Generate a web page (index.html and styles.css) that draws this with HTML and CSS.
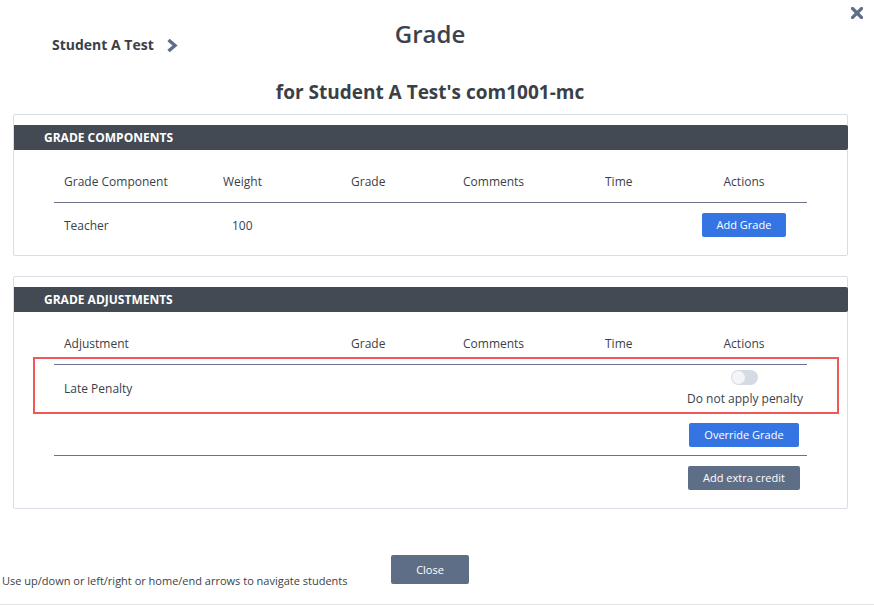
FILE: index.html
```html
<!DOCTYPE html>
<html>
<head>
<meta charset="utf-8">
<link rel="stylesheet" href="styles.css">
</head>
<body>
<div class="page">
  <header class="top">
    <div class="crumb">
      <span>Student A Test</span>
      <svg class="chev" width="12" height="13" viewBox="0 0 12 13"><polyline points="2.5,1 9,6.5 2.5,12" fill="none" stroke="#5f6e87" stroke-width="3.4"/></svg>
    </div>
    <h1 class="title">Grade</h1>
    <div></div>
  </header>
  <svg class="close-x" width="12" height="12" viewBox="0 0 12 12"><path d="M1.5 1.5 L10.5 10.5 M10.5 1.5 L1.5 10.5" stroke="#5f6e87" stroke-width="3.2" stroke-linecap="square"/></svg>

  <h2 class="subtitle">for Student A Test's com1001-mc</h2>

  <section class="panel">
    <div class="panel-head">GRADE COMPONENTS</div>
    <div class="grid">
      <div class="row th">
        <div class="c">Grade Component</div>
        <div class="c">Weight</div>
        <div class="c">Grade</div>
        <div class="c">Comments</div>
        <div class="c">Time</div>
        <div class="c act">Actions</div>
      </div>
      <div class="row td last">
        <div class="c">Teacher</div>
        <div class="c num">100</div>
        <div class="c"></div>
        <div class="c"></div>
        <div class="c"></div>
        <div class="c act"><button class="btn blue">Add Grade</button></div>
      </div>
    </div>
  </section>

  <section class="panel">
    <div class="panel-head">GRADE ADJUSTMENTS</div>
    <div class="grid">
      <div class="row th">
        <div class="c">Adjustment</div>
        <div class="c"></div>
        <div class="c">Grade</div>
        <div class="c">Comments</div>
        <div class="c">Time</div>
        <div class="c act">Actions</div>
      </div>
      <div class="row td late">
        <div class="c">Late Penalty</div>
        <div class="c"></div>
        <div class="c"></div>
        <div class="c"></div>
        <div class="c"></div>
        <div class="c act stack">
          <span class="toggle"><span class="knob"></span></span>
          <span class="tlabel">Do not apply penalty</span>
        </div>
        <div class="highlight"></div>
      </div>
      <div class="row td">
        <div class="c"></div>
        <div class="c"></div>
        <div class="c"></div>
        <div class="c"></div>
        <div class="c"></div>
        <div class="c act"><button class="btn blue">Override Grade</button></div>
      </div>
      <div class="row td last">
        <div class="c"></div>
        <div class="c"></div>
        <div class="c"></div>
        <div class="c"></div>
        <div class="c"></div>
        <div class="c act"><button class="btn gray">Add extra credit</button></div>
      </div>
    </div>
  </section>

  <footer class="foot">
    <div class="hint">Use up/down or left/right or home/end arrows to navigate students</div>
    <button class="btn gray closebtn">Close</button>
    <div></div>
  </footer>
</div>
</body>
</html>
```

FILE: styles.css
```css
* { box-sizing: border-box; }
html, body { margin: 0; padding: 0; background: #fff; }
body {
  font-family: "Open Sans", "Noto Sans", sans-serif;
  color: #3a3f48;
  width: 874px;
  height: 606px;
  overflow: hidden;
}
.page {
  position: relative;
  height: 605px;
  border-bottom: 1px solid #e4e6ec;
}
.top {
  display: grid;
  grid-template-columns: 1fr auto 1fr;
  align-items: start;
  width: 860px;
  padding-top: 18px;
}
.crumb {
  display: flex;
  align-items: center;
  padding-left: 52px;
  padding-top: 17px;
  font-size: 14px;
  font-weight: 700;
  color: #3a3f48;
}
.chev { margin-left: 12px; margin-top: 1px; }
.title {
  margin: 0;
  font-size: 24px;
  font-weight: 600;
  line-height: 32px;
  color: #3d434d;
}
.close-x {
  position: absolute;
  left: 851px;
  top: 7px;
}
.subtitle {
  margin: 24px 0 0;
  width: 860px;
  text-align: center;
  font-size: 19px;
  font-weight: 700;
  line-height: 28px;
  color: #3a3f48;
}
.panel {
  width: 835px;
  margin: 8px 0 0 13px;
  border: 1px solid #d9dde6;
  border-radius: 2px;
  padding: 10px 0 10px;
}
.panel + .panel { margin-top: 20px; }
.panel-head {
  background: #434a54;
  color: #fff;
  height: 25px;
  line-height: 25px;
  font-size: 12px;
  font-weight: 700;
  padding-left: 30px;
  margin-right: -1px;
  border-radius: 0 2px 2px 0;
}
.grid {
  margin: 13px 40px 0;
  position: relative;
}
.row {
  display: grid;
  grid-template-columns: 159px 128px 112px 142px 86px 126px;
  align-items: center;
  font-size: 12px;
}
.row.th {
  height: 40px;
  border-bottom: 1px solid #6b7289;
  padding-bottom: 3px;
}
.row.td {
  border-bottom: 1px solid #6b7289;
  padding: 10px 0 8px;
}
.row.td.last { border-bottom: none; }
.c { padding-left: 10px; }
.num { padding-left: 19px; }
.act {
  padding-left: 0;
  display: flex;
  justify-content: center;
  text-align: center;
}
.row.late {
  height: 48px;
  padding: 0;
  position: relative;
}
.stack {
  flex-direction: column;
  align-items: center;
  align-self: start;
  padding-top: 5px;
}
.toggle {
  display: block;
  width: 27px;
  height: 15px;
  border-radius: 8px;
  background: #d6dae4;
  position: relative;
}
.knob {
  position: absolute;
  left: 1px;
  top: 1px;
  width: 13px;
  height: 13px;
  border-radius: 50%;
  background: #f4f5f8;
}
.tlabel {
  font-size: 12px;
  margin-top: 5px;
  margin-left: 2px;
  color: #3a3f48;
}
.highlight {
  position: absolute;
  left: -21px;
  right: -32px;
  top: -8px;
  bottom: -2px;
  border: 2px solid #f05757;
  pointer-events: none;
}
.btn {
  font-family: "Open Sans", "Noto Sans", sans-serif;
  font-size: 11px;
  height: 24px;
  padding: 0 15px;
  border: none;
  border-radius: 2px;
  color: #fff;
  line-height: 24px;
}
.btn.blue { background: #3574e3; }
.btn.gray { background: #5f6e87; }
.foot {
  display: grid;
  grid-template-columns: 1fr auto 1fr;
  width: 860px;
  margin-top: 46px;
  align-items: end;
}
.hint {
  font-size: 11px;
  padding-left: 2px;
  line-height: 16px;
  color: #3a3f48;
}
.closebtn {
  width: 78px;
  height: 29px;
  font-size: 11px;
  line-height: 29px;
  padding: 0;
  margin-bottom: 5px;
}
```
